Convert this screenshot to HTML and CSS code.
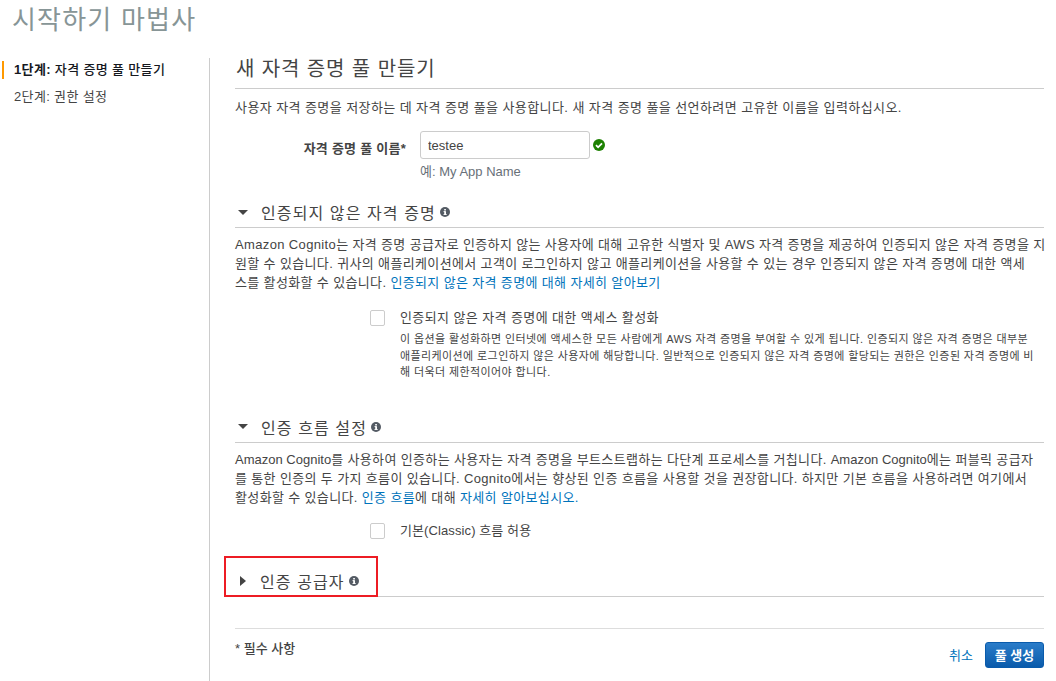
FILE: index.html
```html
<!DOCTYPE html>
<html lang="ko">

<head>
  <meta charset="UTF-8">
  <meta name="viewport" content="width=device-width, initial-scale=1.0">
  <title>시작하기 마법사</title>
  <link rel="stylesheet" href="styles.css">
</head>

<body>
  <h1 class="wizard-title">시작하기 마법사</h1>

  <div class="wizard">
    <ul class="steps">
      <li class="step active"><b>1단계:</b> 자격 증명 풀 만들기</li>
      <li class="step">2단계: 권한 설정</li>
    </ul>

    <div class="content">
      <h2 class="page-title">새 자격 증명 풀 만들기</h2>
      <p class="text intro">사용자 자격 증명을 저장하는 데 자격 증명 풀을 사용합니다. 새 자격 증명 풀을 선언하려면 고유한 이름을 입력하십시오.</p>

      <div class="field">
        <label class="field-label" for="poolName">자격 증명 풀 이름*</label>
        <div class="field-body">
          <div class="field-row">
            <input class="field-input" type="text" id="poolName" value="testee">
            <svg class="ok-icon" width="12" height="12" viewBox="0 0 12 12">
              <circle cx="6" cy="6" r="6" fill="#1d8102"/>
              <path d="M3 6.2l2.1 2.1L9 4.3" fill="none" stroke="#fff" stroke-width="1.8"/>
            </svg>
          </div>
          <div class="hint">예: My App Name</div>
        </div>
      </div>

      <section class="section first">
        <h3 class="section-head">
          <span class="caret-down"></span>인증되지 않은 자격 증명
          <svg class="info-icon" width="10" height="10" viewBox="0 0 10 10">
            <circle cx="5" cy="5" r="5" fill="#545b64"/>
            <rect x="4.2" y="4.2" width="1.8" height="3.6" fill="#fff"/>
            <rect x="3.5" y="4.2" width="1.5" height="0.9" fill="#fff"/>
            <rect x="3.5" y="7.1" width="3.2" height="0.9" fill="#fff"/>
            <rect x="4.2" y="2" width="1.7" height="1.5" fill="#fff"/>
          </svg>
        </h3>
        <p class="text">Amazon Cognito는 자격 증명 공급자로 인증하지 않는 사용자에 대해 고유한 식별자 및 AWS 자격 증명을 제공하여 인증되지 않은 자격 증명을 지<br>원할 수 있습니다. 귀사의 애플리케이션에서 고객이 로그인하지 않고 애플리케이션을 사용할 수 있는 경우 인증되지 않은 자격 증명에 대한 액세<br>스를 활성화할 수 있습니다. <a href="#">인증되지 않은 자격 증명에 대해 자세히 알아보기</a></p>
        <div class="check">
          <span class="checkbox"></span>
          <div>
            <div class="check-label">인증되지 않은 자격 증명에 대한 액세스 활성화</div>
            <p class="check-note">이 옵션을 활성화하면 인터넷에 액세스한 모든 사람에게 AWS 자격 증명을 부여할 수 있게 됩니다. 인증되지 않은 자격 증명은 대부분<br>애플리케이션에 로그인하지 않은 사용자에 해당합니다. 일반적으로 인증되지 않은 자격 증명에 할당되는 권한은 인증된 자격 증명에 비<br>해 더욱더 제한적이어야 합니다.</p>
          </div>
        </div>
      </section>

      <section class="section second">
        <h3 class="section-head">
          <span class="caret-down"></span>인증 흐름 설정
          <svg class="info-icon" width="10" height="10" viewBox="0 0 10 10">
            <circle cx="5" cy="5" r="5" fill="#545b64"/>
            <rect x="4.2" y="4.2" width="1.8" height="3.6" fill="#fff"/>
            <rect x="3.5" y="4.2" width="1.5" height="0.9" fill="#fff"/>
            <rect x="3.5" y="7.1" width="3.2" height="0.9" fill="#fff"/>
            <rect x="4.2" y="2" width="1.7" height="1.5" fill="#fff"/>
          </svg>
        </h3>
        <p class="text"><span class="latin">Amazon Cognito</span>를 사용하여 인증하는 사용자는 자격 증명을 부트스트랩하는 다단계 프로세스를 거칩니다. <span class="latin">Amazon Cognito</span>에는 퍼블릭 공급자<br>를 통한 인증의 두 가지 흐름이 있습니다. Cognito에서는 향상된 인증 흐름을 사용할 것을 권장합니다. 하지만 기본 흐름을 사용하려면 여기에서<br>활성화할 수 있습니다. <a href="#">인증 흐름</a>에 대해 <a href="#">자세히 알아보십시오.</a></p>
        <div class="check check-single">
          <span class="checkbox"></span>
          <div class="check-label">기본(Classic) 흐름 허용</div>
        </div>
      </section>

      <section class="section third">
        <h3 class="section-head">
          <span class="caret-right"></span>인증 공급자
          <svg class="info-icon" width="10" height="10" viewBox="0 0 10 10">
            <circle cx="5" cy="5" r="5" fill="#545b64"/>
            <rect x="4.2" y="4.2" width="1.8" height="3.6" fill="#fff"/>
            <rect x="3.5" y="4.2" width="1.5" height="0.9" fill="#fff"/>
            <rect x="3.5" y="7.1" width="3.2" height="0.9" fill="#fff"/>
            <rect x="4.2" y="2" width="1.7" height="1.5" fill="#fff"/>
          </svg>
        </h3>
        <div class="highlight"></div>
      </section>

      <div class="footer">
        <span class="required">* 필수 사항</span>
        <div class="actions">
          <a class="cancel" href="#">취소</a>
          <button class="primary">풀 생성</button>
        </div>
      </div>
    </div>
  </div>
</body>

</html>
```

FILE: styles.css
```css
body {
  margin: 0;
  padding: 0;
  height: 681px;
  overflow: hidden;
  background: #fff;
  color: #444;
  font-family: "Liberation Sans", "Noto Sans CJK KR", sans-serif;
  font-size: 13px;
}

a {
  color: #0073bb;
  text-decoration: none;
}

.wizard-title {
  margin: 0;
  padding: 0 0 0 12px;
  height: 58px;
  color: #879596;
  font-size: 26px;
  font-weight: 400;
  line-height: 40px;
  letter-spacing: 1.2px;
}

.wizard {
  display: flex;
  height: 623px;
}

.steps {
  box-sizing: border-box;
  width: 210px;
  margin: 0;
  padding: 0;
  list-style: none;
  border-right: 1px solid #ccc;
}

.step {
  margin: 3px 0 9px 2px;
  padding-left: 10px;
  height: 18px;
  line-height: 18px;
  border-left: 2px solid transparent;
  color: #444;
  letter-spacing: 0.35px;
}

.step.active {
  border-left-color: #f90;
  color: #16191f;
  font-weight: 500;
}

.content {
  position: relative;
  width: 809px;
  margin-left: 25px;
}

.page-title {
  margin: 0;
  padding: 0 0 0 1px;
  height: 30px;
  color: #444;
  font-size: 20px;
  font-weight: 400;
  line-height: 22px;
  letter-spacing: 0.9px;
  border-bottom: 1px solid #ccc;
}

.text {
  margin: 0;
  line-height: 19px;
  color: #444;
  letter-spacing: 0.36px;
  white-space: nowrap;
}

.latin {
  letter-spacing: 0;
}

.intro {
  margin-top: 9px;
  letter-spacing: 0.42px;
}

.field {
  display: flex;
  margin-top: 14px;
}

.field-label {
  width: 171px;
  padding-top: 7px;
  text-align: right;
  font-weight: 700;
  color: #444;
  letter-spacing: 0.25px;
}

.field-body {
  margin-left: 14px;
}

.field-row {
  display: flex;
  align-items: center;
}

.field-input {
  box-sizing: border-box;
  width: 170px;
  height: 28px;
  padding: 0 7px;
  border: 1px solid #ccc;
  border-radius: 3px;
  color: #444;
  font-family: inherit;
  font-size: 13px;
}

.ok-icon {
  margin-left: 3px;
}

.hint {
  margin-top: 5px;
  line-height: 16px;
  color: #687078;
  font-size: 13px;
}

.section-head {
  display: flex;
  align-items: center;
  margin: 0;
  height: 30px;
  color: #444;
  font-size: 16px;
  font-weight: 400;
  letter-spacing: 1.1px;
  border-bottom: 1px solid #ccc;
}

.section.first {
  margin-top: 17px;
}

.section .text {
  margin-top: 7px;
}

.section.second {
  margin-top: 31px;
}

.section.third {
  position: relative;
  margin-top: 27px;
}

.caret-down {
  width: 0;
  height: 0;
  margin: 0 13px 0 3px;
  border-left: 5px solid transparent;
  border-right: 5px solid transparent;
  border-top: 5px solid #444;
}

.caret-right {
  width: 0;
  height: 0;
  margin: 0 14px 0 5px;
  border-top: 5px solid transparent;
  border-bottom: 5px solid transparent;
  border-left: 6px solid #444;
}

.info-icon {
  margin-left: 4px;
}

.check {
  display: flex;
  margin-top: 17px;
  margin-left: 135px;
}

.check-single {
  margin-top: 15px;
}

.checkbox {
  box-sizing: border-box;
  flex: none;
  width: 15px;
  height: 16px;
  margin: 1px 15px 0 0;
  border: 1px solid #ccc;
  border-radius: 2px;
}

.check-label {
  line-height: 17px;
  color: #444;
  letter-spacing: 0.4px;
}

.check-single .check-label {
  letter-spacing: 0.1px;
}

.check-note {
  margin: 5px 0 0;
  color: #444;
  font-size: 11px;
  line-height: 16.5px;
  letter-spacing: 0.4px;
  white-space: nowrap;
}

.highlight {
  position: absolute;
  left: -11px;
  top: -10px;
  width: 150px;
  height: 37px;
  border: 2px solid #ed1c24;
}

.footer {
  display: flex;
  justify-content: space-between;
  margin-top: 31px;
  padding-top: 9px;
  border-top: 1px solid #ddd;
}

.required {
  color: #444;
  font-weight: 500;
}

.actions {
  display: flex;
  align-items: center;
  gap: 12px;
  margin-top: 4px;
}

.primary {
  width: 59px;
  height: 26px;
  padding: 0;
  background: linear-gradient(#2a7cc9, #0a5bab);
  border: 1px solid #0a5bab;
  border-radius: 3px;
  color: #fff;
  font-family: inherit;
  font-size: 13px;
  font-weight: 700;
}
```
